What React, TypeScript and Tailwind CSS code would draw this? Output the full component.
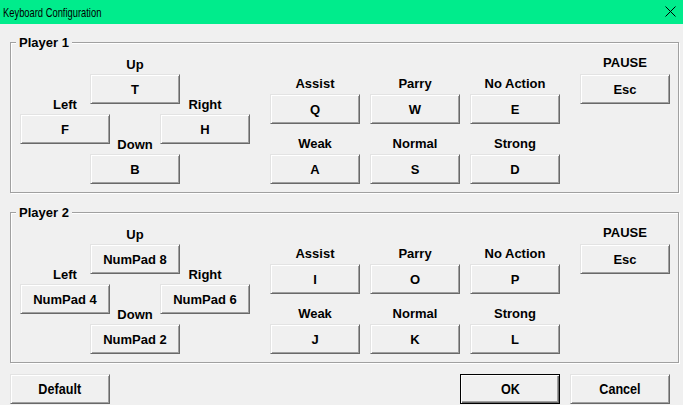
import React from "react";

const btnBase =
  "flex items-center justify-center h-[30px] bg-[#f0f0f0] border border-t-[#e3e3e3] border-l-[#e3e3e3] border-r-[#696969] border-b-[#696969] shadow-[inset_1px_1px_0_#fff,inset_-1px_-1px_0_#a0a0a0] text-[13px] font-bold text-black leading-none";

function Key({ children, className = "" }: { children: React.ReactNode; className?: string }) {
  return <div className={`${btnBase} w-[90px] ${className}`}>{children}</div>;
}

function Label({ children }: { children: React.ReactNode }) {
  return <div className="text-center leading-[15px] text-[13px] font-bold whitespace-nowrap">{children}</div>;
}

function Action({ label, keyName, className = "" }: { label: string; keyName: string; className?: string }) {
  return (
    <div className={`flex flex-col ${className}`}>
      <Label>{label}</Label>
      <Key className="mt-[3px]">{keyName}</Key>
    </div>
  );
}

type Cfg = {
  title: string;
  up: string;
  left: string;
  right: string;
  down: string;
  assist: string;
  parry: string;
  noAction: string;
  weak: string;
  normal: string;
  strong: string;
  pause: string;
};

function Group({ cfg, className = "" }: { cfg: Cfg; className?: string }) {
  return (
    <fieldset
      className={`ml-[10px] w-[669px] h-[159px] border border-[#a0a0a0] shadow-[1px_1px_0_#fff,inset_1px_1px_0_#fff] ${className}`}
    >
      <legend className="ml-[5px] px-[3px] leading-[17px] text-[13px] font-bold bg-[#f0f0f0]">{cfg.title}</legend>
      <div className="flex items-start pt-[4px] pl-[9px]">
        {/* D-pad */}
        <div className="flex items-start">
          <div className="w-[90px] mt-[42px] flex flex-col">
            <Label>Left</Label>
            <Key className="mt-[2px]">{cfg.left}</Key>
          </div>
          <div className="w-[90px] -ml-[20px] mt-[2px] flex flex-col">
            <Label>Up</Label>
            <Key className="mt-[2px]">{cfg.up}</Key>
            <div className="mt-[33px]">
              <Label>Down</Label>
            </div>
            <Key className="mt-[2px]">{cfg.down}</Key>
          </div>
          <div className="w-[90px] -ml-[20px] mt-[42px] flex flex-col">
            <Label>Right</Label>
            <Key className="mt-[2px]">{cfg.right}</Key>
          </div>
        </div>
        {/* Actions */}
        <div className="ml-[20px] mt-[21px] grid grid-cols-[90px_90px_90px] gap-x-[10px] gap-y-[12px]">
          <Action label="Assist" keyName={cfg.assist} />
          <Action label="Parry" keyName={cfg.parry} />
          <Action label="No Action" keyName={cfg.noAction} />
          <Action label="Weak" keyName={cfg.weak} />
          <Action label="Normal" keyName={cfg.normal} />
          <Action label="Strong" keyName={cfg.strong} />
        </div>
        {/* Pause */}
        <div className="ml-[20px] w-[90px] flex flex-col">
          <Label>PAUSE</Label>
          <Key className="mt-[4px]">{cfg.pause}</Key>
        </div>
      </div>
    </fieldset>
  );
}

function Narrow({ children }: { children: React.ReactNode }) {
  return <span className="inline-block scale-x-[0.9] text-[14px] font-bold leading-none">{children}</span>;
}

export default function App() {
  const p1: Cfg = {
    title: "Player 1",
    up: "T",
    left: "F",
    right: "H",
    down: "B",
    assist: "Q",
    parry: "W",
    noAction: "E",
    weak: "A",
    normal: "S",
    strong: "D",
    pause: "Esc",
  };
  const p2: Cfg = {
    title: "Player 2",
    up: "NumPad 8",
    left: "NumPad 4",
    right: "NumPad 6",
    down: "NumPad 2",
    assist: "I",
    parry: "O",
    noAction: "P",
    weak: "J",
    normal: "K",
    strong: "L",
    pause: "Esc",
  };
  return (
    <div className="w-[683px] h-[405px] overflow-hidden bg-[#f0f0f0] text-black font-['Liberation_Sans',Arial,sans-serif]">
      {/* Title bar */}
      <div className="h-[24px] bg-[#00ec8c] flex items-center justify-between pl-[3px] pr-[7px]">
        <span className="inline-block origin-left scale-x-[0.72] text-[13px] leading-none whitespace-nowrap">
          Keyboard Configuration
        </span>
        <svg width="11" height="11" viewBox="0 0 11 11" className="mt-[-1px]">
          <path d="M0.5 0.5 L10.5 10.5 M10.5 0.5 L0.5 10.5" stroke="#000" strokeWidth="1" fill="none" />
        </svg>
      </div>

      <Group cfg={p1} className="mt-[10px]" />
      <Group cfg={p2} className="mt-[11px]" />

      {/* Bottom buttons */}
      <div className="mt-[11px] flex pl-[10px] pr-[13px]">
        <div className={`${btnBase} w-[100px]`}>
          <Narrow>Default</Narrow>
        </div>
        <div className="ml-auto flex items-center justify-center h-[30px] w-[100px] bg-[#f0f0f0] border border-black shadow-[inset_1px_1px_0_#fff,inset_-1px_-1px_0_#696969,inset_-2px_-2px_0_#a0a0a0]">
          <Narrow>OK</Narrow>
        </div>
        <div className={`${btnBase} ml-[10px] w-[100px]`}>
          <Narrow>Cancel</Narrow>
        </div>
      </div>
    </div>
  );
}
